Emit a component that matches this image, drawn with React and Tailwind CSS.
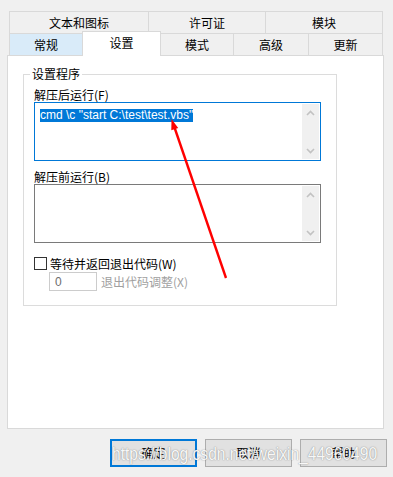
import React from "react";

const cjk = { fontFamily: '"Noto Sans CJK SC", "Noto Sans", sans-serif' };

function Chevron({ up }) {
  return (
    <div className="h-[17px] w-[17px] flex items-center justify-center">
      <svg width="9" height="6" viewBox="0 0 9 6">
        {up ? (
          <path d="M1 5 L4.5 1.5 L8 5" fill="none" stroke="#c2c2c2" strokeWidth="1.6" />
        ) : (
          <path d="M1 1 L4.5 4.5 L8 1" fill="none" stroke="#c2c2c2" strokeWidth="1.6" />
        )}
      </svg>
    </div>
  );
}

function TextBox({ focused, children }) {
  return (
    <div
      className={
        "flex w-[287px] h-[59px] bg-white p-[1px] border " +
        (focused ? "border-[#0078d7]" : "border-[#7a7a7a]")
      }
    >
      <div className="flex-1 pl-[4px] pt-[1px]">{children}</div>
      <div className="w-[17px] h-full bg-[#f0f0f0] flex flex-col justify-between">
        <Chevron up />
        <Chevron />
      </div>
    </div>
  );
}

export default function App() {
  return (
    <div
      className="relative w-[393px] h-[477px] bg-[#f0f0f0] overflow-hidden text-[12px] text-black"
      style={cjk}
    >
      <div className="pt-[11px] pl-[9px]">
        <div className="flex w-[374px] h-[23px] border border-[#d9d9d9] bg-[#f0f0f0]">
          <div className="w-[139px] border-r border-[#d9d9d9] flex items-center justify-center leading-none">文本和图标</div>
          <div className="w-[117px] border-r border-[#d9d9d9] flex items-center justify-center leading-none">许可证</div>
          <div className="flex-1 flex items-center justify-center leading-none">模块</div>
        </div>
        <div className="flex items-start w-[374px] h-[21px]">
          <div className="w-[73px] h-full border-l border-[#d9d9d9] bg-[#d9ebf9] flex items-center justify-center leading-none">常规</div>
          <div className="relative z-10 w-[79px] h-[25px] -mt-[3px] border-x border-t border-[#d9d9d9] bg-white flex items-center justify-center leading-none pb-[2px]">设置</div>
          <div className="w-[73px] h-full border-r border-[#d9d9d9] flex items-center justify-center leading-none">模式</div>
          <div className="w-[75px] h-full border-r border-[#d9d9d9] flex items-center justify-center leading-none">高级</div>
          <div className="w-[74px] h-full border-r border-[#d9d9d9] flex items-center justify-center leading-none">更新</div>
        </div>
      </div>

      <div className="ml-[7px] w-[377px] h-[374px] border border-[#d9d9d9] bg-white pl-[15px] pt-[18px]">
        <div className="relative w-[314px] h-[232px] border border-[#dcdcdc] pl-[10px] pt-[12px]">
          <span className="absolute left-[6px] -top-[9px] bg-white px-[2px] leading-[16px]">设置程序</span>
          <div className="leading-[16px] h-[15px]">解压后运行(F)</div>
          <TextBox focused>
            <span
              className="bg-[#0078d7] text-white text-[12px] leading-[13px] inline-block"
              style={{ fontFamily: '"Liberation Sans", Arial, sans-serif' }}
            >
              cmd \c "start C:\test\test.vbs"
            </span>
          </TextBox>
          <div className="leading-[16px] h-[15px] mt-[8px]">解压前运行(B)</div>
          <TextBox />
          <div className="flex items-center h-[15px] mt-[13px]">
            <div className="w-[13px] h-[13px] border border-[#333333] bg-white"></div>
            <span className="ml-[3px] leading-none">等待并返回退出代码(W)</span>
          </div>
          <div className="flex items-center mt-[1px] ml-[15px]">
            <div
              className="w-[48px] h-[19px] border border-[#cccccc] bg-white text-[#6d6d6d] pl-[5px] flex items-center text-[12px]"
              style={{ fontFamily: '"Liberation Sans", Arial, sans-serif' }}
            >
              0
            </div>
            <span className="ml-[4px] text-[#a0a0a0] leading-none">退出代码调整(X)</span>
          </div>
        </div>
      </div>

      <div className="flex justify-end gap-[8px] pr-[6px] mt-[10px]">
        <button className="w-[87px] h-[28px] bg-[#e1e1e1] border-2 border-[#0078d7] flex items-center justify-center leading-none">确定</button>
        <button className="w-[87px] h-[28px] bg-[#e1e1e1] border border-[#adadad] flex items-center justify-center leading-none">取消</button>
        <button className="w-[87px] h-[28px] bg-[#e1e1e1] border border-[#adadad] flex items-center justify-center leading-none">帮助</button>
      </div>

      <svg className="absolute left-0 top-0 pointer-events-none" width="393" height="477">
        <line x1="226" y1="278" x2="174" y2="126" stroke="#ff0000" strokeWidth="2.4" />
        <polygon points="171.5,119 178.2,128 171.3,130.3" fill="#ff0000" />
      </svg>

      <div
        className="absolute left-[112px] top-[443px] text-[19px] leading-[22px] text-white/95 whitespace-nowrap origin-left scale-x-[0.82] pointer-events-none [text-shadow:0_0_1px_rgba(60,60,60,0.45),0_0_2px_rgba(60,60,60,0.25)]"
        style={{ fontFamily: '"Liberation Sans", Arial, sans-serif' }}
      >
        https://blog.csdn.net/weixin_44960490
      </div>
    </div>
  );
}
